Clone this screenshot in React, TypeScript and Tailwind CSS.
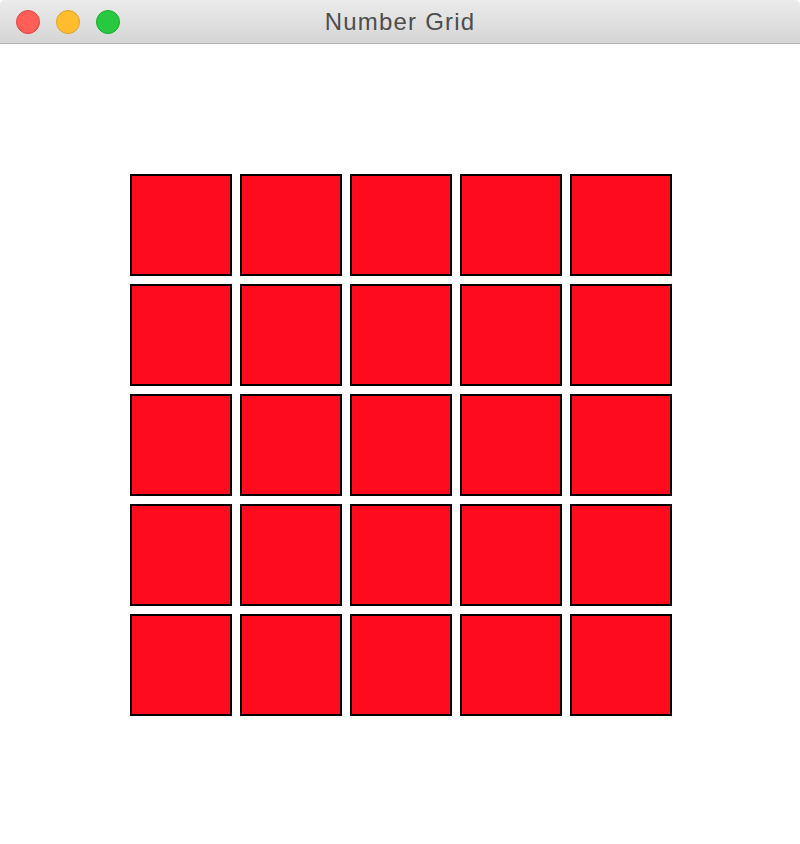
import React from 'react';

const cells = Array.from({ length: 25 }, (_, i) => i);

export default function App() {
  return (
    <div className="w-[800px] h-[844px] bg-white flex flex-col overflow-hidden rounded-t-[5px]" style={{ fontFamily: '"Helvetica Neue", "Liberation Sans", Arial, sans-serif' }}>
      {/* Title bar */}
      <div className="relative h-[44px] shrink-0 bg-linear-to-b from-[#ebebeb] to-[#d5d5d5] border-b border-[#b4b4b4] flex items-center justify-center">
        <div className="absolute left-[16px] top-[10px] flex gap-[16px]">
          <span className="w-[24px] h-[24px] rounded-full bg-[#ff5f57] border border-[#e0443e]" />
          <span className="w-[24px] h-[24px] rounded-full bg-[#ffbd2e] border border-[#dea123]" />
          <span className="w-[24px] h-[24px] rounded-full bg-[#28c940] border border-[#1aab29]" />
        </div>
        <span className="text-[24px] tracking-[1.2px] text-[#4d4d4d] leading-none">Number Grid</span>
      </div>

      {/* Content */}
      <div className="flex-1 pt-[130px] pl-[130px]">
        <div className="grid grid-cols-[repeat(5,102px)] gap-[8px]">
          {cells.map((i) => (
            <div key={i} className="w-[102px] h-[102px] border-2 border-black bg-[#fe0c1e]" />
          ))}
        </div>
      </div>
    </div>
  );
}
